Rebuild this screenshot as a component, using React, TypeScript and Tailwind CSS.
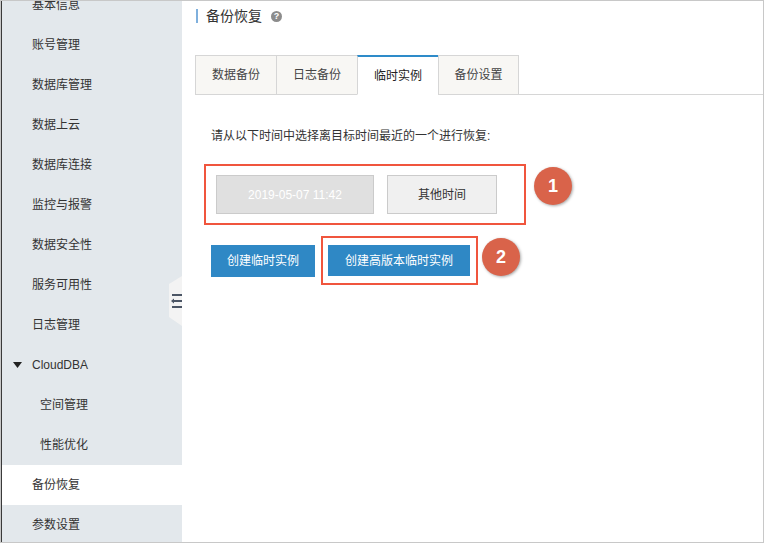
import React from "react";

const FONT = {
  fontFamily: '"Liberation Sans", "Noto Sans CJK SC", Arial, sans-serif',
};

const menu = [
  { label: "基本信息" },
  { label: "账号管理" },
  { label: "数据库管理" },
  { label: "数据上云" },
  { label: "数据库连接" },
  { label: "监控与报警" },
  { label: "数据安全性" },
  { label: "服务可用性" },
  { label: "日志管理" },
  { label: "CloudDBA", group: true },
  { label: "空间管理", sub: true },
  { label: "性能优化", sub: true },
  { label: "备份恢复", active: true },
  { label: "参数设置" },
];

const tabs = ["数据备份", "日志备份", "临时实例", "备份设置"];

function Sidebar() {
  return (
    <aside className="w-[181px] shrink-0 bg-[#e3e8ec] border-l border-[#3a3a3a] overflow-hidden">
      <ul className="-mt-[16px]">
        {menu.map((m) => (
          <li
            key={m.label}
            className={
              "h-10 flex items-center text-[12px] text-[#333] " +
              (m.sub ? "pl-[38px] " : "pl-[30px] ") +
              (m.active ? "bg-white" : "")
            }
          >
            {m.group && (
              <svg
                width="9"
                height="6"
                viewBox="0 0 9 6"
                className="-ml-[19px] mr-[10px]"
              >
                <polygon points="0,0 9,0 4.5,6" fill="#222" />
              </svg>
            )}
            {m.label}
          </li>
        ))}
      </ul>
    </aside>
  );
}

function Badge({ n }: { n: string }) {
  return (
    <div className="w-[38px] h-[38px] rounded-full bg-[#d9634a] text-white text-[18px] font-bold flex items-center justify-center shadow-[1px_1px_3px_rgba(0,0,0,0.35)]">
      {n}
    </div>
  );
}

function Main() {
  return (
    <main className="flex-1 bg-white flex flex-col">
      {/* title */}
      <div className="flex items-center h-[14px] mt-[8px] ml-[14px]">
        <div className="w-[2px] h-[14px] bg-[#7fb0dd]" />
        <span className="ml-[8px] text-[14px] leading-[14px] text-[#333]">
          备份恢复
        </span>
        <span className="ml-[9px] w-[11px] h-[11px] rounded-full bg-[#8c8c8c] text-white text-[9px] font-bold leading-none flex items-center justify-center">
          ?
        </span>
      </div>

      {/* tabs */}
      <div className="flex items-end mt-[32px] ml-[13px] border-b border-[#d6d6d6]">
        {tabs.map((t, i) => {
          const active = i === 2;
          return (
            <div
              key={t}
              className={
                "h-[40px] w-[81px] -mb-px flex items-center justify-center text-[12px] border-l border-b " +
                (i === tabs.length - 1 ? "border-r " : "") +
                (active
                  ? "bg-white text-[#222] border-t-2 border-t-[#2e8bc9] border-l-[#d6d6d6] border-r-[#d6d6d6] border-b-white"
                  : "bg-[#f8f7f4] text-[#444] border-t border-[#d6d6d6]")
              }
            >
              {t}
            </div>
          );
        })}
      </div>

      <div className="pl-[29px]">
        <p className="mt-[34px] text-[12px] leading-[14px] text-[#333]">
          请从以下时间中选择离目标时间最近的一个进行恢复:
        </p>

        <div className="flex items-start mt-[21px]">
          <div className="-ml-[7px] flex gap-[13px] border-2 border-[#f0553d] pl-[10px] pr-[27px] py-[9px]">
            <button className="w-[158px] h-[39px] bg-[#e0e0e0] border border-[#cbcbcb] text-white text-[12px]">
              2019-05-07 11:42
            </button>
            <button className="w-[110px] h-[39px] bg-[#f0f0f0] border border-[#cbcbcb] text-[#333] text-[12px]">
              其他时间
            </button>
          </div>
          <div className="ml-[8px] mt-[3px]">
            <Badge n="1" />
          </div>
        </div>

        <div className="flex items-start mt-[11px]">
          <button className="mt-[9px] w-[104px] h-[32px] bg-[#2f88c5] text-white text-[12px]">
            创建临时实例
          </button>
          <div className="ml-[6px] border-2 border-[#f0553d] pl-[5px] pr-[6px] py-[7px]">
            <button className="w-[142px] h-[31px] bg-[#2f88c5] text-white text-[12px]">
              创建高版本临时实例
            </button>
          </div>
          <div className="ml-[4px] mt-[2px]">
            <Badge n="2" />
          </div>
        </div>
      </div>
    </main>
  );
}

export default function App() {
  return (
    <div
      className="relative w-[764px] h-[543px] flex border border-[#c8c8c8] overflow-hidden bg-white"
      style={FONT}
    >
      <Sidebar />
      <Main />
      {/* collapse handle */}
      <svg
        className="absolute left-[168px] top-[275px]"
        width="13"
        height="51"
        viewBox="0 0 13 51"
      >
        <polygon points="13,0 0,8 0,41 13,50" fill="#f3f3f3" />
        <rect x="3" y="18" width="10" height="2" fill="#4b5565" />
        <rect x="5" y="24" width="8" height="2" fill="#4b5565" />
        <polygon points="2,25 5,22.5 5,27.5" fill="#4b5565" />
        <rect x="3" y="30" width="10" height="2" fill="#4b5565" />
      </svg>
    </div>
  );
}
